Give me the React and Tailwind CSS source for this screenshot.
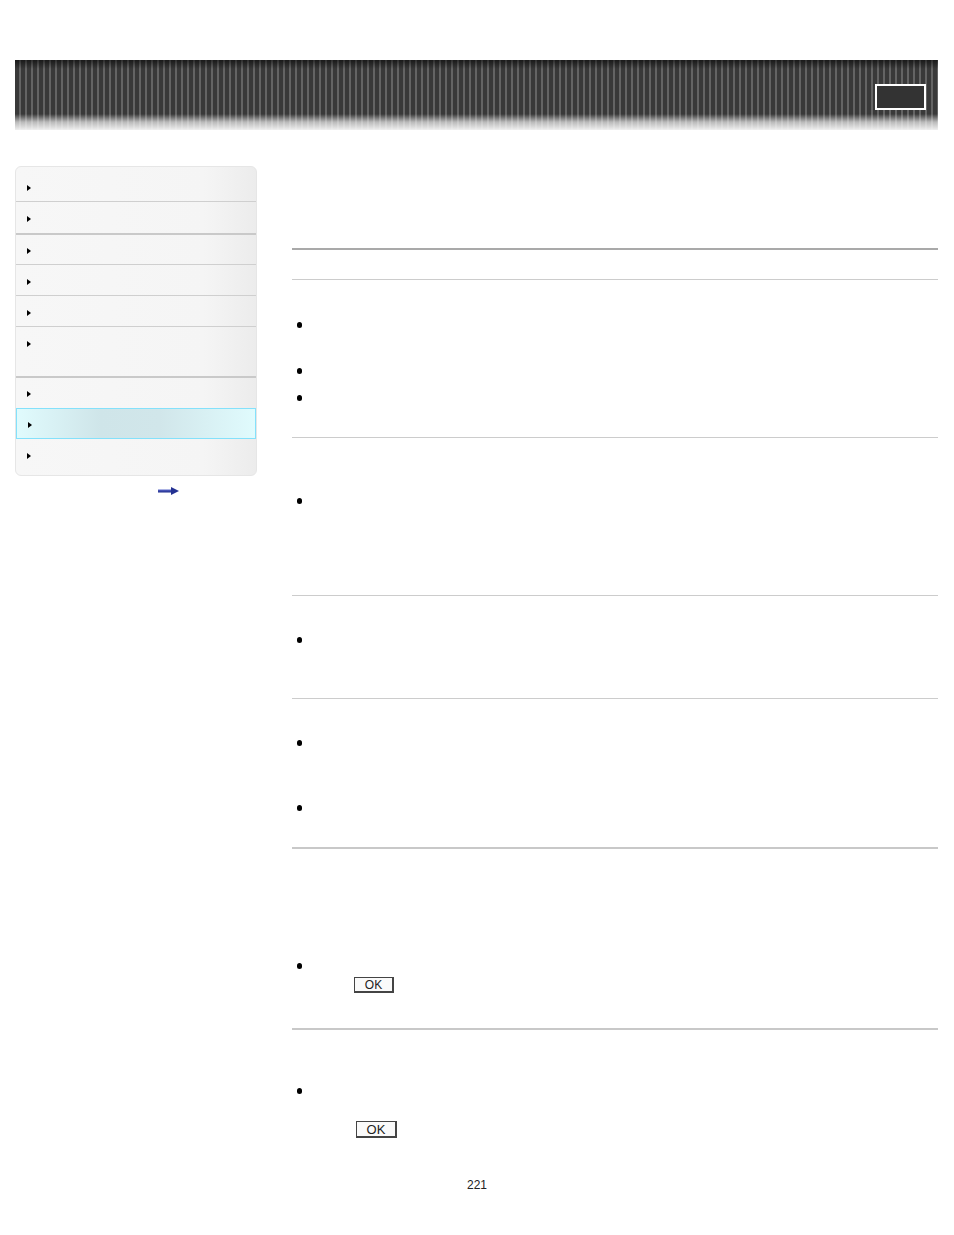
export default function App() {
  const Tri = () => (
    <div className="w-0 h-0 border-y-[3.5px] border-y-transparent border-l-[4px] border-l-black" />
  );
  const Bullet = ({ cls }) => (
    <div className={`ml-[5px] w-[5px] h-[6px] rounded-full bg-black ${cls}`} />
  );
  const rows = [
    { h: "h-[35px]", pt: "pt-[18px]", b: "border-b border-[#cfcfcf]" },
    { h: "h-[33px]", pt: "pt-[14px]", b: "border-b-2 border-[#c9c9c9]" },
    { h: "h-[30px]", pt: "pt-[13px]", b: "border-b border-[#cfcfcf]" },
    { h: "h-[31px]", pt: "pt-[14px]", b: "border-b border-[#cfcfcf]" },
    { h: "h-[31px]", pt: "pt-[14px]", b: "border-b border-[#cfcfcf]" },
    { h: "h-[51px]", pt: "pt-[14px]", b: "border-b-2 border-[#c9c9c9]" },
    { h: "h-[30px]", pt: "pt-[13px]", b: "" },
  ];
  return (
    <div className="w-[954px] min-h-[1235px] bg-white font-['Liberation_Sans',Arial,sans-serif] pt-[60px]">
      {/* header */}
      <div className="mx-[15px] w-[923px] h-[70px] relative bg-[repeating-linear-gradient(90deg,#393939_0px,#393939_4px,#646464_4px,#646464_6px)]">
        <div className="absolute inset-0 bg-[linear-gradient(180deg,rgba(0,0,0,0.55)_0px,rgba(0,0,0,0)_9px,rgba(0,0,0,0)_54px,rgba(240,240,240,0.7)_62px,rgba(245,245,245,0.97)_70px)]" />
        <div className="relative flex justify-end pr-[12px] pt-[24px]">
          <div className="w-[51px] h-[26px] border-2 border-white bg-[#333333]" />
        </div>
      </div>

      <div className="flex mt-[36px]">
        {/* sidebar */}
        <div className="ml-[15px] w-[242px] shrink-0">
          <div className="rounded-[6px] border border-[#e6e6e6] bg-[linear-gradient(90deg,#f7f7f7_0%,#f5f5f5_78%,#ececec_100%)] overflow-hidden">
            {rows.map((r, i) => (
              <div key={i} className={`${r.h} ${r.pt} ${r.b} pl-[11px]`}>
                <Tri />
              </div>
            ))}
            <div className="h-[31px] pt-[13px] pl-[11px] border border-[#84e1fb] bg-[linear-gradient(90deg,#e0fbfd_0%,#cfe5e9_35%,#d1e6ea_60%,#e0fbfd_100%)]">
              <Tri />
            </div>
            <div className="h-[36px] pt-[14px] pl-[11px]">
              <Tri />
            </div>
          </div>
          <div className="ml-[143px] mt-[11px]">
            <svg width="21" height="8" viewBox="0 0 21 8" className="block">
              <defs>
                <linearGradient id="ag" x1="0" y1="0" x2="0" y2="1">
                  <stop offset="0" stopColor="#5a67c9" />
                  <stop offset="1" stopColor="#1c2a8a" />
                </linearGradient>
              </defs>
              <rect x="0" y="2.5" width="14" height="3" fill="url(#ag)" />
              <polygon points="13,0 21,4 13,8" fill="#233192" />
            </svg>
          </div>
        </div>

        {/* main */}
        <div className="ml-[35px] w-[646px] flex flex-col">
          <div className="mt-[82px] h-[2px] bg-[#a9a9a9]" />
          <div className="mt-[29px] h-px bg-[#cccccc]" />
          <Bullet cls="mt-[42px]" />
          <Bullet cls="mt-[40px]" />
          <Bullet cls="mt-[21px]" />
          <div className="mt-[36px] h-px bg-[#cccccc]" />
          <Bullet cls="mt-[60px]" />
          <div className="mt-[91px] h-px bg-[#cccccc]" />
          <Bullet cls="mt-[41px]" />
          <div className="mt-[55px] h-px bg-[#cccccc]" />
          <Bullet cls="mt-[41px]" />
          <Bullet cls="mt-[59px]" />
          <div className="mt-[36px] h-[2px] bg-[#c8c8c8]" />
          <Bullet cls="mt-[114px]" />
          <div className="mt-[8px] ml-[62px] w-[40px] h-[16px] border border-[#444] border-r-2 border-b-2 bg-[#fafafa] flex items-center justify-center text-[12px] leading-none text-[#222]">
            OK
          </div>
          <div className="mt-[35px] h-[2px] bg-[#c8c8c8]" />
          <Bullet cls="mt-[58px]" />
          <div className="mt-[27px] ml-[64px] w-[41px] h-[17px] border border-[#444] border-r-2 border-b-2 bg-[#fafafa] flex items-center justify-center text-[13px] leading-none text-[#222]">
            OK
          </div>
        </div>
      </div>

      <div className="mt-[39px] text-center text-[12px] leading-[16px] text-[#222]">221</div>
    </div>
  );
}
